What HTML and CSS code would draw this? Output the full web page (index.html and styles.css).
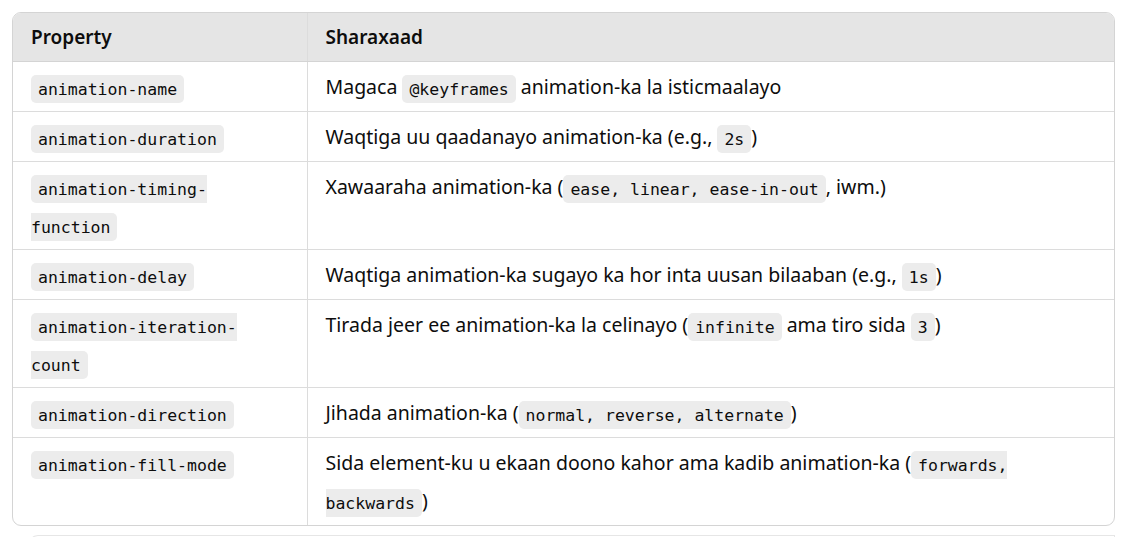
FILE: index.html
```html
<!DOCTYPE html>
<html lang="so">
<head>
<meta charset="utf-8">
<title>Animation properties</title>
<link rel="stylesheet" href="styles.css">
</head>
<body>
<div class="page">
  <div class="table-wrap">
    <table class="props">
      <colgroup><col class="col-prop"><col></colgroup>
      <thead>
        <tr><th class="c1">Property</th><th>Sharaxaad</th></tr>
      </thead>
      <tbody>
        <tr><td class="c1"><code>animation-name</code></td><td>Magaca <code>@keyframes</code> animation-ka la isticmaalayo</td></tr>
        <tr><td class="c1"><code>animation-duration</code></td><td>Waqtiga uu qaadanayo animation-ka (e.g., <code>2s</code>)</td></tr>
        <tr><td class="c1"><code>animation-timing-function</code></td><td>Xawaaraha animation-ka (<code>ease, linear, ease-in-out</code>, iwm.)</td></tr>
        <tr><td class="c1"><code>animation-delay</code></td><td>Waqtiga animation-ka sugayo ka hor inta uusan bilaaban (e.g., <code>1s</code>)</td></tr>
        <tr><td class="c1"><code>animation-iteration-count</code></td><td>Tirada jeer ee animation-ka la celinayo (<code>infinite</code> ama tiro sida <code>3</code>)</td></tr>
        <tr><td class="c1"><code>animation-direction</code></td><td>Jihada animation-ka (<code>normal, reverse, alternate</code>)</td></tr>
        <tr><td class="c1"><code>animation-fill-mode</code></td><td>Sida element-ku u ekaan doono kahor ama kadib animation-ka (<code>forwards, backwards</code>)</td></tr>
      </tbody>
    </table>
  </div>
  <div class="next-block"></div>
</div>
</body>
</html>
```
FILE: styles.css
```css
html, body {
  margin: 0;
  padding: 0;
  background: #ffffff;
}
body {
  font-family: "Noto Sans", "Open Sans", sans-serif;
  color: #0d0d0d;
  font-size: 19.5px;
}
.page {
  padding: 12px 8px 0 12px;
}
.table-wrap {
  border: 1px solid #d4d4d4;
  border-radius: 9px;
  overflow: hidden;
}
.props {
  width: 100%;
  border-collapse: collapse;
  table-layout: fixed;
}
.col-prop {
  width: 294px;
}
.props th {
  background: #e5e5e5;
  font-weight: 600;
  font-size: 19px;
  text-align: left;
  height: 48px;
  padding: 0 18px;
  border-bottom: 1px solid #d4d4d4;
  line-height: 24px;
}
.props td {
  padding: 6px 18px 5px;
  line-height: 38px;
  vertical-align: top;
  border-bottom: 1px solid #dcdcdc;
}
.props tbody tr:last-child td {
  border-bottom: none;
}
.props .c1 {
  border-right: 1px solid #dcdcdc;
}
code {
  font-family: "DejaVu Sans Mono", monospace;
  font-size: 16.5px;
  line-height: 1;
  background: #ececec;
  border-radius: 5px;
  padding: 4.5px 7px;
}
.next-block {
  margin: 9px 0 0 16px;
  height: 20px;
  border: 1px solid #e6e6e6;
  border-bottom: none;
  border-radius: 10px 0 0 0;
}
```
